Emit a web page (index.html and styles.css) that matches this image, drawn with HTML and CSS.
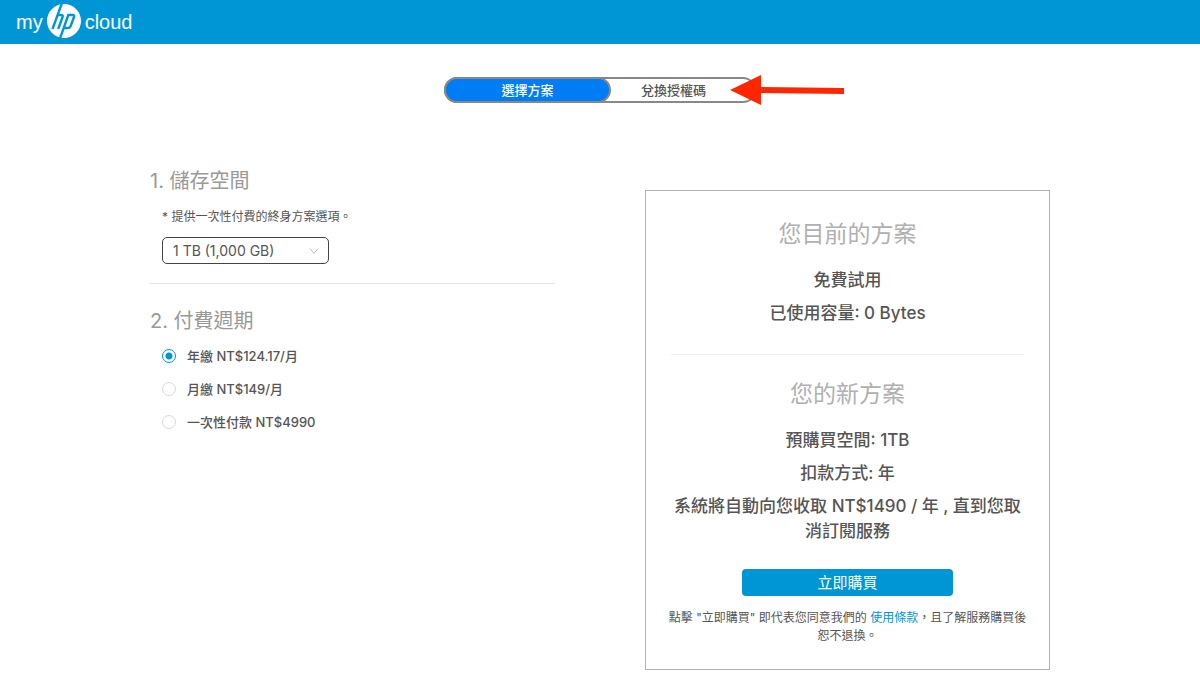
FILE: index.html
```html
<!DOCTYPE html>
<html lang="zh-Hant">
<head>
<meta charset="utf-8">
<meta name="viewport" content="width=device-width, initial-scale=1">
<title>my hp cloud</title>
<link rel="stylesheet" href="styles.css">
</head>
<body>
<header class="topbar">
  <a class="brand" href="#" aria-label="my hp cloud">
    <span>my</span>
    <svg class="brand-mark" viewBox="0 0 34 34" aria-hidden="true">
      <circle cx="17" cy="17" r="17" fill="#fff"/>
      <g fill="none" stroke="#0096d6" stroke-width="2.4">
        <path d="M15 -1 L5.500 25"/>
        <path d="M10.800 11 H14.400 Q16.300 11 15.600 13 L11.200 25"/>
        <path d="M12.800 35 L21.300 11 H25.800 Q27.700 11 27 13 L23.500 22.400 Q23 24 21.300 24 H17.400"/>
      </g>
    </svg>
    <span>cloud</span>
  </a>
</header>
<main class="page">
  <nav class="switch-row">
    <div class="switch">
      <button class="switch-item active" type="button">選擇方案</button>
      <button class="switch-item" type="button">兌換授權碼</button>
      <svg class="pointer" viewBox="0 0 114 32" aria-hidden="true">
        <path d="M0 16 L31 1 V13 L114 14 V20 L31 19 V31 Z" fill="#ff2600"/>
      </svg>
    </div>
  </nav>
  <div class="columns">
    <form class="options">
      <section class="block storage">
        <h2 class="step"><label for="size">1. 儲存空間</label></h2>
        <p class="note">* 提供一次性付費的終身方案選項。</p>
        <div class="select-wrap">
          <select class="select" id="size"><option>1 TB (1,000 GB)</option></select>
          <svg class="chevron" viewBox="0 0 10 8" aria-hidden="true"><path d="M1 1.500 L5 6.500 L9 1.500" fill="none" stroke="#bfbfbf"/></svg>
        </div>
      </section>
      <section class="block">
        <h2 class="step">2. 付費週期</h2>
        <div class="cycles">
          <label class="cycle"><input class="radio" type="radio" name="cycle" checked>年繳 NT$124.17/月</label>
          <label class="cycle"><input class="radio" type="radio" name="cycle">月繳 NT$149/月</label>
          <label class="cycle"><input class="radio" type="radio" name="cycle">一次性付款 NT$4990</label>
        </div>
      </section>
    </form>
    <aside class="card">
      <section class="plan current">
        <h3 class="plan-title">您目前的方案</h3>
        <p>免費試用</p>
        <p>已使用容量: 0 Bytes</p>
      </section>
      <section class="plan">
        <h3 class="plan-title">您的新方案</h3>
        <p>預購買空間: 1TB</p>
        <p>扣款方式: 年</p>
        <p>系統將自動向您收取 NT$1490 / 年 , 直到您取消訂閱服務</p>
      </section>
      <button class="buy" type="button">立即購買</button>
      <p class="terms">點擊 "立即購買" 即代表您同意我們的 <a href="#">使用條款</a>，且了解服務購買後恕不退換。</p>
    </aside>
  </div>
</main>
</body>
</html>
```
FILE: styles.css
```css
* { box-sizing: border-box; }
body {
  margin: 0;
  background: #fff;
  color: #555;
  font-family: Inter, "Noto Sans CJK TC", sans-serif;
  font-size: 13px;
}
h2, h3, p { margin: 0; font-weight: 400; }
button, select, input { font: inherit; color: inherit; }

.topbar {
  display: flex;
  align-items: center;
  height: 44px;
  padding: 0 16px 2px;
  background: #0096d6;
}
.brand {
  display: flex;
  align-items: center;
  gap: 4px;
  color: #fff;
  font-family: "Liberation Sans", sans-serif;
  font-size: 20px;
  line-height: 24px;
  text-decoration: none;
}
.brand span { padding-top: 2px; }
.brand-mark { width: 34px; height: 34px; }

.page { max-width: 948px; margin: 0 auto; padding: 33px 24px 8px; }
.switch-row { display: flex; justify-content: center; }
.switch {
  position: relative;
  display: flex;
  width: 312px;
  height: 26px;
  border: 2px solid #888;
  border-radius: 13px;
}
.switch-item {
  flex: 1;
  padding: 0 18px 0 0;
  border: 0;
  background: none;
  font-weight: 500;
  line-height: 20px;
}
.switch-item.active {
  flex: 0 0 167px;
  margin: -2px 0 -2px -2px;
  padding: 0;
  border: 2px solid #888;
  border-radius: 13px;
  background: #007df5;
  color: #fff;
}
.pointer {
  position: absolute;
  top: -5px;
  left: 284px;
  width: 114px;
  height: 32px;
}

.columns {
  display: grid;
  grid-template-columns: repeat(auto-fit, minmax(320px, 1fr));
  column-gap: 90px;
  row-gap: 32px;
  align-items: start;
  margin-top: 64px;
}
.block + .block { padding-top: 23px; }
.storage { padding-bottom: 19px; border-bottom: 1px solid #e4e4e4; }
.step { color: #999; font-size: 20px; line-height: 28px; }
.note { margin: 14px 0 12px 12px; font-size: 12px; line-height: 16px; }
.select-wrap { position: relative; width: 167px; margin-left: 12px; }
.select {
  display: block;
  width: 100%;
  height: 27px;
  padding: 0 24px 0 10px;
  border: 1px solid #444;
  border-radius: 5px;
  background: #fff;
  font-size: 14px;
  appearance: none;
}
.chevron { position: absolute; top: 10px; right: 10px; width: 10px; height: 8px; pointer-events: none; }
.cycles { display: grid; gap: 13px; margin: 11px 0 0 12px; }
.cycle { display: flex; align-items: center; gap: 11px; font-weight: 500; line-height: 20px; }
.radio {
  appearance: none;
  width: 14px;
  height: 14px;
  margin: 0;
  border: 1px solid #d9d9d9;
  border-radius: 50%;
  background: #fff;
}
.radio:checked {
  border-color: #0096d6;
  background: radial-gradient(circle, #0096d6 3px, #fff 4px);
}

.card {
  margin-top: 23px;
  padding: 25px 25px 24px;
  border: 1px solid #b0b0b0;
  text-align: center;
}
.plan { display: grid; gap: 8px; font-size: 17px; line-height: 25px; }
.plan p { font-weight: 500; }
.current { padding-bottom: 28px; margin-bottom: 21px; border-bottom: 1px solid #eee; }
.plan-title { margin-bottom: 8px; color: #b0b0b0; font-size: 23px; line-height: 36px; }
.buy {
  width: 60%;
  height: 27px;
  margin-top: 25px;
  padding: 0;
  border: 0;
  border-radius: 4px;
  background: #0096d6;
  color: #fff;
  font-size: 15px;
  line-height: 27px;
}
.terms { margin: 13px -8px 0; font-size: 12px; line-height: 18px; }
.terms a { color: #0096d6; text-decoration: none; }
```
